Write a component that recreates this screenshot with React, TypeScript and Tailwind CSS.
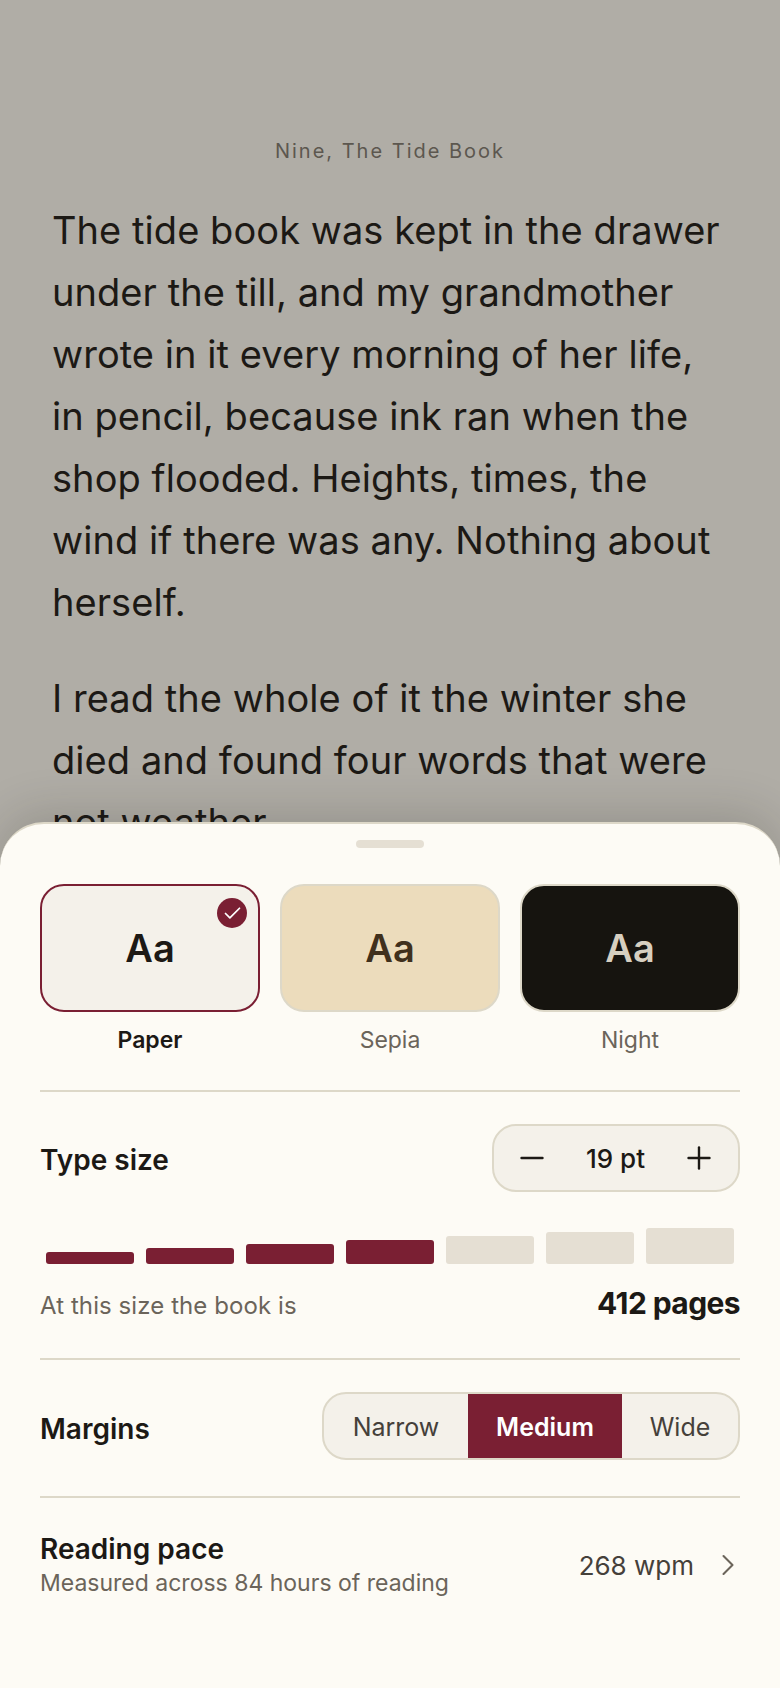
import React from 'react';
import { Check, ChevronRight, Minus, Plus } from 'lucide-react';

const THEMES = [
  { name: 'Paper', card: 'bg-[#f4f1ea] border-[#7a1f33]', ink: 'text-[#1c1915]', label: 'text-[#1c1915] font-semibold', selected: true },
  { name: 'Sepia', card: 'bg-[#ecdcbc] border-[#ddd8c8]', ink: 'text-[#40301c]', label: 'text-[#6b645a]', selected: false },
  { name: 'Night', card: 'bg-[#16140f] border-[#ddd8c8]', ink: 'text-[#d6cfc0]', label: 'text-[#6b645a]', selected: false },
];

const BARS = [
  { h: 'h-[12px]', on: true },
  { h: 'h-[16px]', on: true },
  { h: 'h-[20px]', on: true },
  { h: 'h-[24px]', on: true },
  { h: 'h-[28px]', on: false },
  { h: 'h-[32px]', on: false },
  { h: 'h-[36px]', on: false },
];

const Divider = () => <div className="h-[2px] bg-[#ddd8c8]" />;

const App: React.FC = () => {
  return (
    <div className="relative w-[780px] h-[1688px] overflow-hidden bg-[#b0ada6] font-['Inter',sans-serif]">
      <div className="pt-[136px] px-[52px]">
        <p className="text-center text-[20px] leading-[30px] tracking-[2px] text-[#5c574f]">Nine, The Tide Book</p>
        <p className="mt-[33px] text-[38px] leading-[62px] tracking-[0.06px] text-[#1c1915]">
          The tide book was kept in the drawer under the till, and my grandmother wrote in it every morning of her life, in pencil, because ink ran when the shop flooded. Heights, times, the wind if there was any. Nothing about herself.
        </p>
        <p className="mt-[34px] text-[38px] leading-[62px] tracking-[0.06px] text-[#1c1915]">
          I read the whole of it the winter she died and found four words that were not weather.
        </p>
      </div>

      <div className="absolute left-0 right-0 bottom-0 h-[866px] bg-[#fdfbf5] border-t-2 border-[#ddd8c8] rounded-t-[44px] shadow-[0_-8px_48px_rgba(28,25,21,0.18)] px-[40px] pt-[16px]">
        <div className="mx-auto w-[68px] h-[8px] rounded-full bg-[#e5dfd3]" />

        <div className="mt-[36px] grid grid-cols-3 gap-[20px]">
          {THEMES.map((t) => (
            <div key={t.name} className="flex flex-col items-center">
              <div className={`relative w-full h-[128px] rounded-[24px] border-2 flex items-center justify-center ${t.card}`}>
                <span className={`text-[38px] font-semibold ${t.ink}`}>Aa</span>
                {t.selected && (
                  <span className="absolute top-[12px] right-[11px] w-[30px] h-[30px] rounded-full bg-[#7a1f33] flex items-center justify-center">
                    <Check size={21} strokeWidth={2} className="text-white" />
                  </span>
                )}
              </div>
              <span className={`mt-[12px] text-[23px] leading-[32px] ${t.label}`}>{t.name}</span>
            </div>
          ))}
        </div>

        <div className="mt-[34px]">
          <Divider />
        </div>

        <div className="mt-[32px] flex items-center justify-between">
          <span className="relative top-[2px] text-[28px] font-semibold text-[#1c1915]">Type size</span>
          <div className="w-[248px] h-[68px] pl-[20px] pr-[21px] rounded-[24px] border-2 border-[#ddd8c8] bg-[#f4f1ea] flex items-center justify-between text-[#1c1915]">
            <Minus size={36} strokeWidth={1.6} />
            <span className="text-[26px] font-medium">19 pt</span>
            <Plus size={36} strokeWidth={1.6} />
          </div>
        </div>

        <div className="mt-[36px] px-[6px] flex items-end gap-[12px]">
          {BARS.map((b, i) => (
            <div key={i} className={`flex-1 rounded-[3px] ${b.h} ${b.on ? 'bg-[#7a1f33]' : 'bg-[#e5dfd3]'}`} />
          ))}
        </div>

        <div className="mt-[21px] flex items-center justify-between">
          <span className="relative top-[3px] text-[24px] leading-[36px] tracking-[0.08px] text-[#6b645a]">At this size the book is</span>
          <span className="text-[30px] leading-[36px] font-bold tracking-[-0.6px] text-[#1c1915]">412 pages</span>
        </div>

        <div className="mt-[37px]">
          <Divider />
        </div>

        <div className="mt-[32px] flex items-center justify-between">
          <span className="relative top-[3px] text-[28px] font-semibold text-[#1c1915]">Margins</span>
          <div className="h-[68px] rounded-[24px] border-2 border-[#ddd8c8] bg-[#f4f1ea] overflow-hidden flex text-[25px]">
            <span className="w-[144px] pt-[3px] flex items-center justify-center text-[#45403a]">Narrow</span>
            <span className="w-[154px] pt-[3px] flex items-center justify-center bg-[#7a1f33] text-white font-semibold">Medium</span>
            <span className="w-[116px] pt-[3px] flex items-center justify-center text-[#45403a]">Wide</span>
          </div>
        </div>

        <div className="mt-[36px]">
          <Divider />
        </div>

        <div className="mt-[33px] flex items-center justify-between">
          <div className="flex flex-col">
            <span className="text-[28px] leading-[36px] font-semibold text-[#1c1915]">Reading pace</span>
            <span className="text-[23px] leading-[32px] text-[#6b645a]">Measured across 84 hours of reading</span>
          </div>
          <div className="flex items-center gap-[16px] -mr-[6px] text-[#45403a]">
            <span className="text-[26px]">268 wpm</span>
            <ChevronRight size={36} strokeWidth={1.4} className="text-[#6b645a]" />
          </div>
        </div>
      </div>
    </div>
  );
};

export default App;
